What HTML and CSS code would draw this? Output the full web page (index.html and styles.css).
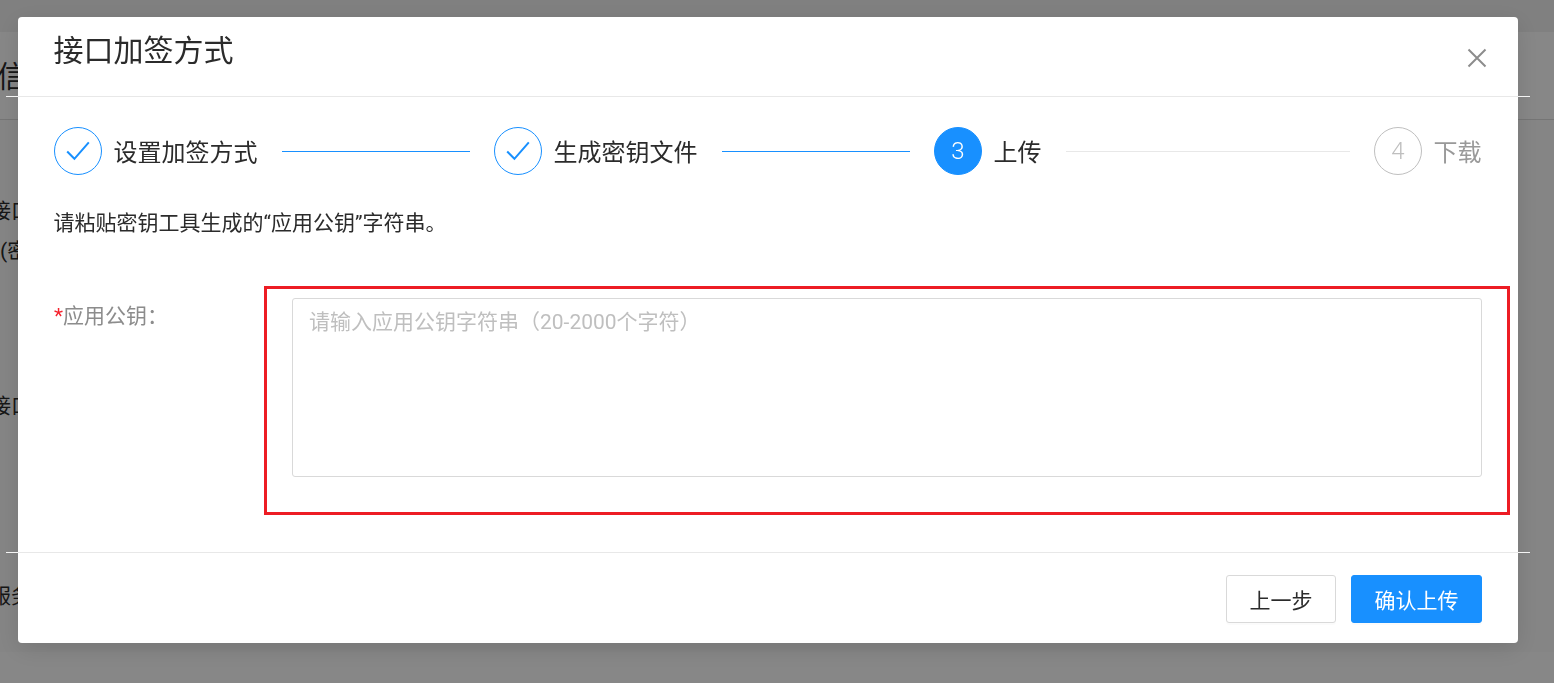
FILE: index.html
```html
<!DOCTYPE html>
<html lang="zh-CN">
<head>
<meta charset="utf-8">
<title>接口加签方式</title>
<link rel="stylesheet" href="styles.css">
</head>
<body>
<main class="page">
  <section class="card">
    <h2 class="card-title">信息</h2>
    <div class="card-body">
      <p class="bg-line bg-first">接口加签方式</p>
      <p class="bg-line bg-second">(密钥</p>
      <p class="bg-line bg-third">接口内容</p>
      <p class="bg-line bg-fourth">服务地址</p>
    </div>
  </section>
</main>
<div class="mask">
  <div class="modal" role="dialog">
    <header class="modal-header">
      <h1 class="modal-title">接口加签方式</h1>
      <svg class="close-icon" viewBox="0 0 20 20" aria-label="关闭"><path d="M1.5 1.5 18.5 18.5M18.5 1.5 1.5 18.5"/></svg>
    </header>
    <div class="rule"></div>
    <div class="modal-body">
      <ol class="steps">
        <li class="step done">
          <span class="step-icon"><svg class="check" viewBox="0 0 24 20"><path d="M1.2 10.5 8.4 17.8 22.8 1.4"/></svg></span>
          <span class="step-label">设置加签方式</span>
          <span class="step-line"></span>
        </li>
        <li class="step done">
          <span class="step-icon"><svg class="check" viewBox="0 0 24 20"><path d="M1.2 10.5 8.4 17.8 22.8 1.4"/></svg></span>
          <span class="step-label">生成密钥文件</span>
          <span class="step-line"></span>
        </li>
        <li class="step current">
          <span class="step-icon">3</span>
          <span class="step-label">上传</span>
          <span class="step-line"></span>
        </li>
        <li class="step todo">
          <span class="step-icon">4</span>
          <span class="step-label">下载</span>
        </li>
      </ol>
      <p class="hint">请粘贴密钥工具生成的“应用公钥”字符串。</p>
      <div class="form-row">
        <label class="form-label" for="key"><span class="required">*</span>应用公钥：</label>
        <div class="field">
          <textarea class="input" id="key" placeholder="请输入应用公钥字符串（20-2000个字符）"></textarea>
          <div class="annotation"></div>
        </div>
      </div>
    </div>
    <div class="rule"></div>
    <footer class="modal-footer">
      <button class="btn" type="button">上一步</button>
      <button class="btn btn-primary" type="button">确认上传</button>
    </footer>
  </div>
</div>
</body>
</html>
```
FILE: styles.css
```css
* { box-sizing: border-box; }
html, body { height: 100%; margin: 0; overflow: hidden; }
body {
  background: #f1f1f1;
  color: #2b2b2b;
  font-family: "Roboto", "Noto Sans CJK SC", sans-serif;
}
.page { height: 683px; padding-top: 32px; overflow: hidden; }
.card { background: #fff; height: 651px; }
.card-title {
  margin: 0 0 0 -3px;
  padding: 30px 0 27px;
  border-bottom: 1px solid #ddd;
  font-size: 30px;
  font-weight: 400;
  line-height: 30px;
}
.card-body { padding-top: 35px; margin-left: -10px; background: #fbfbfb; height: 532px; }
.bg-line { margin: 0; font-size: 21px; line-height: 30px; }
.bg-first { margin-top: 41px; }
.bg-second { margin-top: 10px; margin-left: 10px; }
.bg-third { margin-top: 125px; }
.bg-fourth { margin-top: 160px; }

.mask {
  position: fixed;
  inset: 0;
  background: rgba(0, 0, 0, .47);
  padding: 17px 0 0 18px;
}
.modal {
  display: flex;
  flex-direction: column;
  width: 1500px;
  height: 626px;
  background: #fff;
  border-radius: 4px;
  box-shadow: 0 6px 24px rgba(0, 0, 0, .12);
}
.modal-header {
  display: flex;
  justify-content: space-between;
  align-items: flex-start;
  height: 79px;
  padding: 19px 31px 0 35.5px;
}
.modal-title {
  margin: 0;
  font-size: 30px;
  font-weight: 400;
  line-height: 30px;
  color: #2b2b2b;
}
.close-icon { width: 20px; height: 20px; margin-top: 12px; fill: none; stroke: #8c8c8c; stroke-width: 2; }
.rule {
  flex: none;
  height: 1px;
  margin: 0 -12px;
  background: linear-gradient(to right, #f4f4f4 12px, #e8e8e8 12px, #e8e8e8 1512px, #f4f4f4 1512px);
}
.modal-body { flex: 1; padding: 30px 36px 0; }

.steps { display: flex; gap: 24px; margin: 0; padding: 0; list-style: none; }
.step { display: flex; flex: 1; align-items: center; height: 48px; }
.step.todo { flex: none; width: 108px; }
.step-icon {
  display: flex;
  flex: none;
  align-items: center;
  justify-content: center;
  width: 48px;
  height: 48px;
  border: 1px solid #1890ff;
  border-radius: 50%;
  font-size: 24px;
  font-weight: 300;
  color: #1890ff;
}
.check { width: 24px; height: 20px; fill: none; stroke: #1890ff; stroke-width: 2; }
.step-label { margin: 4px 0 0 11.5px; font-size: 24px; line-height: 30px; color: #2b2b2b; white-space: nowrap; }
.step-line { flex: 1; height: 1px; margin-left: 24.5px; background: #1890ff; }
.step.current .step-icon { background: #1890ff; color: #fff; }
.step.current .step-line { background: #e8e8e8; }
.step.todo .step-icon { border-color: #bfbfbf; color: #bfbfbf; }
.step.todo .step-label { color: #999; }

.hint { margin: 33px 0 0 -.5px; font-size: 21px; line-height: 30px; color: #2b2b2b; }
.form-row { display: flex; margin-top: 60px; }
.form-label { flex: none; width: 238px; font-size: 21px; line-height: 36px; color: #8c8c8c; }
.required { color: #f5222d; }
.field { position: relative; flex: 1; }
.input {
  display: block;
  width: 100%;
  height: 179px;
  padding: 8px 16px;
  border: 1px solid #d9d9d9;
  border-radius: 3px;
  outline: 0;
  resize: none;
  font: inherit;
  font-size: 21px;
  line-height: 30px;
  color: #333;
}
.input::placeholder { color: #bfbfbf; opacity: 1; }
.annotation {
  position: absolute;
  inset: -12px -28px -38px -28px;
  border: 3px solid #ed1c24;
  pointer-events: none;
}

.modal-footer {
  display: flex;
  flex: none;
  justify-content: flex-end;
  gap: 15px;
  height: 90px;
  padding: 22px 36px 20px;
}
.btn {
  height: 48px;
  padding: 0 22.5px;
  border: 1px solid #d9d9d9;
  border-radius: 3px;
  background: #fff;
  box-shadow: 0 2px 0 rgba(0, 0, 0, .015);
  font: inherit;
  font-size: 21px;
  color: #2b2b2b;
}
.btn-primary { border-color: #1890ff; background: #1890ff; color: #fff; }
```
